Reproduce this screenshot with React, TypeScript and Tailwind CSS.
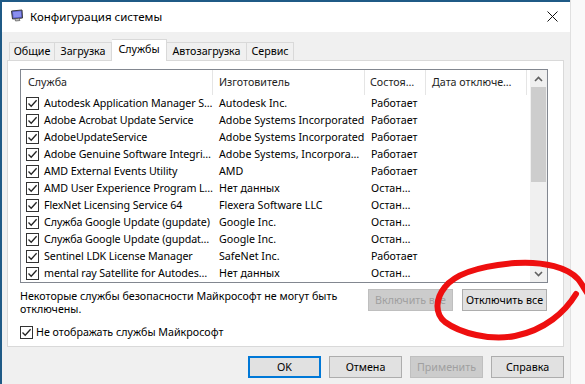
import React from "react";

const rows: [string, string, string][] = [
  ["Autodesk Application Manager S…", "Autodesk Inc.", "Работает"],
  ["Adobe Acrobat Update Service", "Adobe Systems Incorporated", "Работает"],
  ["AdobeUpdateService", "Adobe Systems Incorporated", "Работает"],
  ["Adobe Genuine Software Integri…", "Adobe Systems, Incorpora…", "Работает"],
  ["AMD External Events Utility", "AMD", "Работает"],
  ["AMD User Experience Program L…", "Нет данных", "Остан…"],
  ["FlexNet Licensing Service 64", "Flexera Software LLC", "Остан…"],
  ["Служба Google Update (gupdate)", "Google Inc.", "Остан…"],
  ["Служба Google Update (gupdat…", "Google Inc.", "Остан…"],
  ["Sentinel LDK License Manager", "SafeNet Inc.", "Работает"],
  ["mental ray Satellite for Autodes…", "Нет данных", "Остан…"],
];

function Check() {
  return (
    <div className="w-[13px] h-[13px] border border-[#333333] bg-white flex items-center justify-center shrink-0">
      <svg width="11" height="11" viewBox="0 0 11 11">
        <path d="M1.5 5.5 L4.2 8.3 L9.6 2.2" fill="none" stroke="#222" strokeWidth="1.3" />
      </svg>
    </div>
  );
}

function Btn({ children, disabled, def, w }: { children: React.ReactNode; disabled?: boolean; def?: boolean; w: string }) {
  const base = "h-[22px] flex items-center justify-center shrink-0 whitespace-nowrap ";
  if (disabled)
    return <div className={base + w + " bg-[#cccccc] border border-[#bfbfbf] text-[#a0a0a0]"}>{children}</div>;
  if (def)
    return <div className={base + w + " bg-[#e1e1e1] border-2 border-[#0078d7] text-black"}>{children}</div>;
  return <div className={base + w + " bg-[#e1e1e1] border border-[#adadad] text-black"}>{children}</div>;
}

export default function App() {
  return (
    <div className="w-[585px] h-[384px] overflow-hidden relative flex bg-[#f6f6f6] text-[10.7px] leading-[15px] text-black font-['Noto_Sans',sans-serif]">
      <div className="w-[570px] h-full flex flex-col border-l-2 border-t-2 border-[#1f5a86] shrink-0">
        {/* title bar */}
        <div className="h-[30px] pb-[2px] bg-white flex items-center shrink-0">
          <div className="ml-[8px] w-[14px] h-[14px] flex items-center justify-center">
            <svg width="14" height="14" viewBox="0 0 14 14">
              <path d="M1.5 2 L12 1 L12.5 9 L2.5 10 Z" fill="#5a5fc8" stroke="#3c3c3c" strokeWidth="1" />
              <path d="M3 3 L10.8 2.3 L11.2 7.8 L3.6 8.5 Z" fill="#8a8ff0" />
              <path d="M5 10 L5.5 12 L10 11.5 L9 9.6" fill="#bdbdbd" stroke="#666" strokeWidth="0.8" />
            </svg>
          </div>
          <div className="ml-[6px] text-[11.5px]">Конфигурация системы</div>
          <div className="ml-auto mr-[12px] w-[12px] h-[12px] flex items-center justify-center">
            <svg width="11" height="11" viewBox="0 0 11 11">
              <path d="M0.5 0.5 L10.5 10.5 M10.5 0.5 L0.5 10.5" stroke="#111" strokeWidth="1" />
            </svg>
          </div>
        </div>
        {/* body */}
        <div className="flex-1 bg-[#f0f0f0] pt-[7px] px-[5px] flex flex-col">
          {/* tabs */}
          <div className="flex items-end h-[21px] pl-[2px] relative z-10 whitespace-nowrap">
            <div className="h-[18px] w-[46px] border border-b-0 border-[#d9d9d9] bg-[#f0f0f0] flex items-center justify-center">Общие</div>
            <div className="h-[18px] w-[57px] border border-l-0 border-b-0 border-[#d9d9d9] bg-[#f0f0f0] flex items-center justify-center">Загрузка</div>
            <div className="h-[22px] w-[55px] -mb-[1px] pb-[2px] border border-l-0 border-b-0 border-[#d9d9d9] bg-white flex items-center justify-center">Службы</div>
            <div className="h-[18px] w-[80px] border border-l-0 border-b-0 border-[#d9d9d9] bg-[#f0f0f0] flex items-center justify-center">Автозагрузка</div>
            <div className="h-[18px] w-[47px] border border-l-0 border-b-0 border-[#d9d9d9] bg-[#f0f0f0] flex items-center justify-center">Сервис</div>
          </div>
          {/* panel */}
          <div className="w-[557px] h-[287px] shrink-0 overflow-hidden bg-white border border-[#d9d9d9] pl-[12px] pt-[8px] flex flex-col">
            {/* list */}
            <div className="w-[528px] h-[214px] shrink-0 border border-[#828790] flex">
              <div className="flex-1 flex flex-col">
                <div className="h-[25px] grid grid-cols-[192px_152px_61px_101px] items-center text-[#1e1e1e] whitespace-nowrap">
                  <div className="pl-[7px] h-full flex items-center border-r border-[#e5e5e5]">Служба</div>
                  <div className="pl-[6px] h-full flex items-center border-r border-[#e5e5e5]">Изготовитель</div>
                  <div className="pl-[5px] h-full flex items-center border-r border-[#e5e5e5]">Состоя…</div>
                  <div className="pl-[6px] h-full flex items-center border-r border-[#e5e5e5]">Дата отключе…</div>
                </div>
                {rows.map((r, i) => (
                  <div key={i} className="h-[17px] grid grid-cols-[192px_152px_61px_101px] items-center whitespace-nowrap">
                    <div className="pl-[5px] flex items-center gap-[5px]">
                      <Check />
                      <span className="tracking-[-0.1px]">{r[0]}</span>
                    </div>
                    <div className="pl-[6px] overflow-hidden">{r[1]}</div>
                    <div className="pl-[6px] overflow-hidden">{r[2]}</div>
                    <div />
                  </div>
                ))}
              </div>
              {/* scrollbar */}
              <div className="w-[17px] h-full bg-[#f0f0f0] flex flex-col shrink-0">
                <div className="h-[17px] flex items-center justify-center">
                  <svg width="9" height="6" viewBox="0 0 9 6">
                    <path d="M1 5 L4.5 1.5 L8 5" fill="none" stroke="#606060" strokeWidth="1.6" />
                  </svg>
                </div>
                <div className="mx-[1px] h-[95px] bg-[#cdcdcd]" />
                <div className="flex-1" />
                <div className="h-[17px] flex items-center justify-center">
                  <svg width="9" height="6" viewBox="0 0 9 6">
                    <path d="M1 1 L4.5 4.5 L8 1" fill="none" stroke="#606060" strokeWidth="1.6" />
                  </svg>
                </div>
              </div>
            </div>
            {/* below list */}
            <div className="flex mt-[6px] w-[528px]">
              <div className="w-[340px] leading-[13px] pt-[1px] whitespace-nowrap">
                Некоторые службы безопасности Майкрософт не могут быть
                <br />
                отключены.
              </div>
              <div className="ml-auto flex gap-[9px] pr-[1px]">
                <Btn disabled w="w-[85px]">Включить все</Btn>
                <Btn w="w-[85px]">Отключить все</Btn>
              </div>
            </div>
            <div className="flex items-center gap-[3px] mt-[9px]">
              <Check />
              <span>Не отображать службы Майкрософт</span>
            </div>
          </div>
          {/* bottom buttons */}
          <div className="flex justify-end gap-[8px] mt-[9px] w-[557px]">
            <Btn def w="w-[73px]">OK</Btn>
            <Btn w="w-[73px]">Отмена</Btn>
            <Btn disabled w="w-[73px]">Применить</Btn>
            <Btn w="w-[73px]">Справка</Btn>
          </div>
        </div>
      </div>
      <div className="flex-1 bg-[#f9f9f9] border-l border-[#e0e0e0]" />
      {/* red hand-drawn loop */}
      <svg className="absolute left-0 top-0 pointer-events-none" width="585" height="384" viewBox="0 0 585 384">
        <path
          d="M576 294 C 565 312, 545 330, 515 336 C 490 341, 460 333, 445 322 C 434 313, 436 298, 445 287 C 455 274, 480 266, 515 263 C 545 261, 568 268, 578 279 C 582 284, 585 290, 588 294"
          fill="none"
          stroke="#ee0f0f"
          strokeWidth="6"
          strokeLinecap="round"
        />
      </svg>
    </div>
  );
}
